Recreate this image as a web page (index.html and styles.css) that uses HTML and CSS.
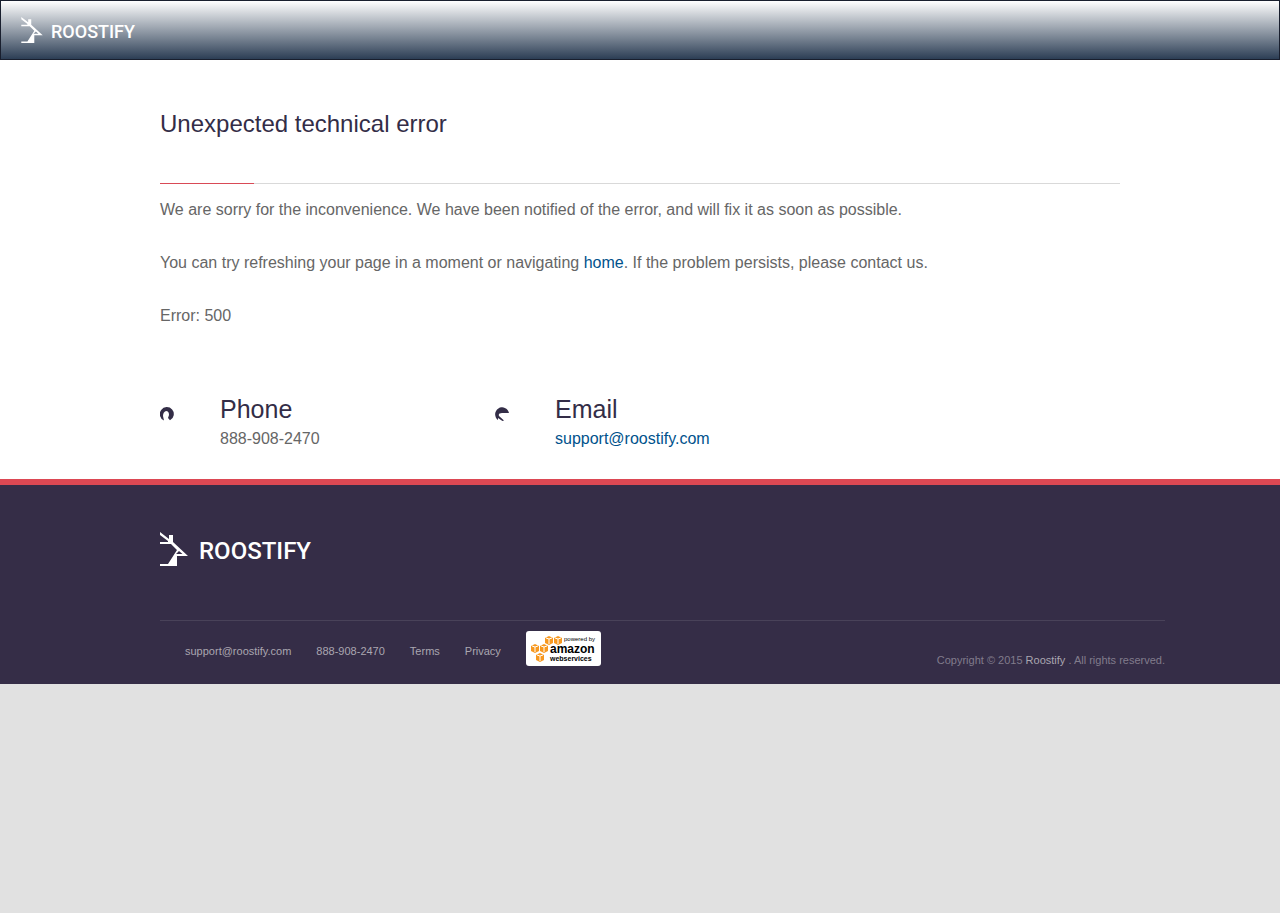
FILE: index.html
```html
<!DOCTYPE html>
<html lang="en">
<head>
<meta charset="utf-8">
<meta name="viewport" content="width=device-width, initial-scale=1">
<title>Roostify - Unexpected technical error</title>
<link rel="stylesheet" href="styles.css">
</head>
<body>
<header class="site-header">
  <a class="logo" href="#" aria-label="Roostify">
    <svg class="logo-bird" viewBox="0 0 28 34" aria-hidden="true"><path fill="currentColor" fill-rule="evenodd" d="M0 0 9 7V3H13V10L28 24H17V34H0V32H8L17 18L11 12H0V10H8V9L0 3ZM19 19L16 22H22.500Z"/></svg>
    <span>ROOSTIFY</span>
  </a>
</header>
<main class="main">
  <div class="container">
    <h1 class="title">Unexpected technical error</h1>
    <p>We are sorry for the inconvenience. We have been notified of the error, and will fix it as soon as possible.</p>
    <p>You can try refreshing your page in a moment or navigating <a href="#">home</a>. If the problem persists, please contact us.</p>
    <p>Error: 500</p>
    <div class="contacts">
      <section class="contact">
        <svg class="contact-icon" viewBox="0 0 14 14" aria-hidden="true"><path d="M4 13.500A7 7 0 1 1 10 13.300L8 11L9 8Q9 4 6 4Q3 5 3 9Z"/></svg>
        <div><h2>Phone</h2><span>888-908-2470</span></div>
      </section>
      <section class="contact">
        <svg class="contact-icon" viewBox="0 0 14 14" aria-hidden="true"><path d="M14 6H7Q3 6 4 9L9 13.500L7.500 14L3 11V13A7 7 0 1 1 14 6Z"/></svg>
        <div><h2>Email</h2><a href="#">support@roostify.com</a></div>
      </section>
    </div>
  </div>
</main>
<footer class="site-footer">
  <div class="container">
    <a class="logo logo-large" href="#" aria-label="Roostify">
      <svg class="logo-bird" viewBox="0 0 28 34" aria-hidden="true"><path fill="currentColor" fill-rule="evenodd" d="M0 0 9 7V3H13V10L28 24H17V34H0V32H8L17 18L11 12H0V10H8V9L0 3ZM19 19L16 22H22.500Z"/></svg>
      <span>ROOSTIFY</span>
    </a>
    <div class="footer-bar">
      <nav class="footer-links" aria-label="Footer">
        <a href="#">support@roostify.com</a>
        <a href="#">888-908-2470</a>
        <a href="#">Terms</a>
        <a href="#">Privacy</a>
        <a class="aws" href="#" aria-label="Powered by Amazon Web Services">
          <svg viewBox="0 0 75 35" aria-hidden="true">
            <rect width="75" height="35" rx="3" fill="#fff"/>
            <defs><g id="cube"><path fill="#f7981f" d="M0 2 4 0 8 2V7L4 9L0 7Z"/><path fill="none" stroke="#fff" d="M1 2 4 3 7 2M4 3V8"/></g></defs>
            <use href="#cube" x="19" y="5"/><use href="#cube" x="28" y="5"/>
            <use href="#cube" x="5" y="13"/><use href="#cube" x="14" y="13"/><use href="#cube" x="10" y="22"/>
            <text x="38" y="10" class="aws-small">powered by</text>
            <text x="24" y="22" class="aws-name">amazon</text>
            <text x="24" y="30" class="aws-web">webservices</text>
          </svg>
        </a>
      </nav>
      <p class="copyright">Copyright © 2015 <a href="#">Roostify</a> . All rights reserved.</p>
    </div>
  </div>
</footer>
</body>
</html>
```
FILE: styles.css
```css
* { box-sizing: border-box; }
body {
  margin: 0;
  background: #e1e1e1;
  color: #666;
  font: 16px/23px "Liberation Sans", Arial, sans-serif;
}
a { color: #00528c; text-decoration: none; }
.container { max-width: 960px; margin: 0 auto; }
.site-header {
  display: flex;
  align-items: center;
  height: 60px;
  padding: 0 20px;
  border: 1px solid #191f2e;
  background: linear-gradient(#fff, #2c3e55);
}
.logo {
  display: inline-flex;
  align-items: center;
  gap: 8px;
  color: #fff;
  font: 500 24px/32px Roboto, "Liberation Sans", sans-serif;
}
.logo span { padding-top: 4px; }
.logo-bird { width: 28px; height: 34px; }
.site-header .logo { font-size: 18px; line-height: 24px; }
.site-header .logo-bird { width: 22px; height: 26px; }
.site-footer .logo { display: flex; gap: 11px; }
.main { background: #fff; padding: 48px 0 29px; }
.title {
  position: relative;
  margin: 0 0 14px;
  padding-bottom: 43px;
  border-bottom: 1px solid #d9d9d9;
  color: #332d47;
  font-size: 24px;
  font-weight: 400;
  line-height: 32px;
}
.title::after {
  content: "";
  position: absolute;
  left: 0;
  bottom: -1px;
  width: 94px;
  height: 1px;
  background: #d94a56;
}
.main p { margin: 0 0 30px; }
.contacts { display: flex; padding-top: 36px; }
.contact { display: flex; flex: 0 0 335px; }
.contact-icon { width: 14px; height: 14px; margin: 14px 46px 0 0; fill: #332d47; }
.contact h2 { margin: 0; padding-bottom: 2px; color: #332d47; font-size: 25px; font-weight: 400; line-height: 32px; }
.site-footer {
  border-top: 6px solid #dc4853;
  background: #352d47;
  padding: 46px 0 18px;
  font-size: 11px;
  line-height: 16px;
}
.footer-bar {
  display: flex;
  justify-content: space-between;
  align-items: flex-end;
  margin: 53px -45px 0 0;
  padding: 10px 0 0 25px;
  border-top: 1px solid #494259;
}
.footer-links { display: flex; align-items: center; gap: 25px; }
.footer-links a { padding-top: 4px; color: #aaa6b0; }
.footer-links .aws { padding: 0; }
.aws svg { display: block; width: 75px; height: 35px; }
.aws-small { font-size: 6px; }
.aws-name { font-size: 12px; font-weight: 700; }
.aws-web { font-size: 7px; font-weight: 700; }
.copyright { margin: 0; line-height: 12px; color: #817c8c; }
.copyright a { color: #aaa6b0; }
@media (max-width: 1060px) {
  .container { padding: 0 20px; }
  .footer-bar { margin-right: 0; }
}
```
